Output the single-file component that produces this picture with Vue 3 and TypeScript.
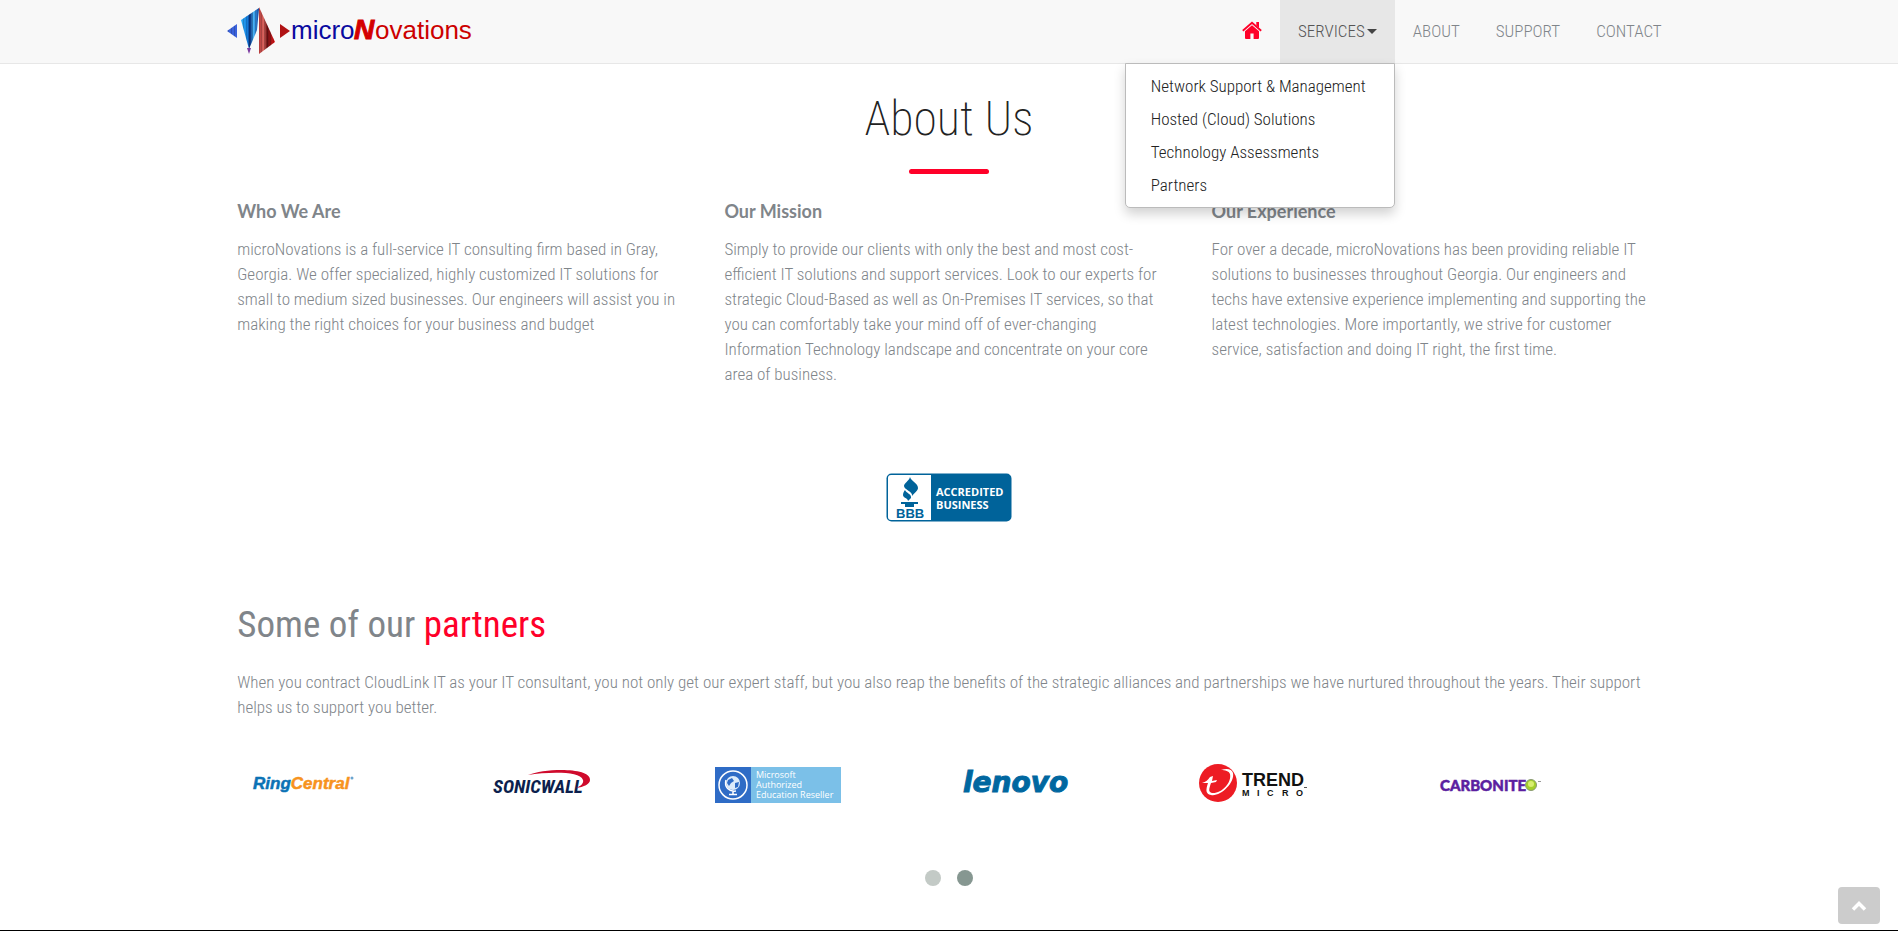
<script setup lang="ts">
import { ref } from 'vue'

interface Column {
  title: string
  text: string
}

const services: string[] = [
  'Network Support & Management',
  'Hosted (Cloud) Solutions',
  'Technology Assessments',
  'Partners',
]

const pages: string[] = ['About', 'Support', 'Contact']

const columns: Column[] = [
  {
    title: 'Who We Are',
    text: 'microNovations is a full-service IT consulting firm based in Gray, Georgia. We offer specialized, highly customized IT solutions for small to medium sized businesses. Our engineers will assist you in making the right choices for your business and budget',
  },
  {
    title: 'Our Mission',
    text: 'Simply to provide our clients with only the best and most cost-efficient IT solutions and support services. Look to our experts for strategic Cloud-Based as well as On-Premises IT services, so that you can comfortably take your mind off of ever-changing Information Technology landscape and concentrate on your core area of business.',
  },
  {
    title: 'Our Experience',
    text: 'For over a decade, microNovations has been providing reliable IT solutions to businesses throughout Georgia. Our engineers and techs have extensive experience implementing and supporting the latest technologies. More importantly, we strive for customer service, satisfaction and doing IT right, the first time.',
  },
]

const microLetters = [
  { letter: 'M', x: 56 },
  { letter: 'I', x: 71 },
  { letter: 'C', x: 81 },
  { letter: 'R', x: 96 },
  { letter: 'O', x: 110 },
]

const menuOpen = ref(true)
const slide = ref(1)
</script>

<template>
  <div class="page">
    <header class="navbar">
      <div class="container bar">
        <a class="brand" href="#" aria-label="microNovations">
          <svg width="264" height="63" viewBox="218 0 264 63">
            <defs>
              <linearGradient id="blueFace" x1="0" x2="1">
                <stop offset="0" stop-color="#2fb0fa" />
                <stop offset="0.35" stop-color="#1580e0" />
                <stop offset="0.5" stop-color="#062a78" />
                <stop offset="0.7" stop-color="#49b4f8" />
                <stop offset="1" stop-color="#0a3d9c" />
              </linearGradient>
              <linearGradient id="redFace" x1="0" x2="1">
                <stop offset="0" stop-color="#b33a3a" />
                <stop offset="0.3" stop-color="#d9655f" />
                <stop offset="0.5" stop-color="#6d1214" />
                <stop offset="0.75" stop-color="#a01518" />
                <stop offset="1" stop-color="#f01010" />
              </linearGradient>
              <pattern id="stripes" width="3" height="4" patternUnits="userSpaceOnUse">
                <rect width="1" height="4" fill="#000" fill-opacity="0.16" />
              </pattern>
            </defs>
            <path d="M227 31 237 24V38Z" fill="#3a62dc" />
            <path d="M241 20 259 8 257 30 249 49Z" fill="url(#blueFace)" />
            <path d="M247 48H251L249 54Z" fill="#7a3aa0" />
            <path d="M259 7 275 42 259 54Z" fill="url(#redFace)" />
            <path d="M227 31 237 24V38ZM259 7 275 42 259 54ZM241 20 259 8 257 30 249 49Z" fill="url(#stripes)" />
            <path d="M280 24 290 31 280 38Z" fill="#b01214" />
            <text class="brand-text" x="291" y="39" fill="#0a0aa0">micro</text>
            <text class="brand-n" x="354" y="39" fill="#d40000">N</text>
            <text class="brand-text" x="375" y="39" fill="#cc0000">ovations</text>
          </svg>
        </a>
        <nav class="menu" aria-label="Main">
          <a class="link home" href="#" aria-label="Home">
            <svg width="20" height="18" viewBox="0 0 20 18">
              <path d="M10 4.2 17 10.2V17a1 1 0 0 1-1 1h-4.400v-5.400H8.400V18H4a1 1 0 0 1-1-1v-6.800Z" />
              <path d="M.8 9.800 10 1.800l9.200 8" fill="none" stroke="#ff0029" stroke-width="1.800" />
              <path d="M14.300 1H17v6l-2.700-2.400Z" />
            </svg>
          </a>
          <div class="dropdown">
            <button class="link toggle" type="button" :aria-expanded="menuOpen" @click="menuOpen = !menuOpen">
              Services<span class="caret"></span>
            </button>
            <ul v-if="menuOpen" class="dropdown-menu">
              <li v-for="service in services" :key="service"><a href="#">{{ service }}</a></li>
            </ul>
          </div>
          <a v-for="page in pages" :key="page" class="link" href="#">{{ page }}</a>
        </nav>
      </div>
    </header>

    <main class="container content">
      <h1>About Us</h1>
      <div class="rule"></div>

      <section class="columns">
        <article v-for="column in columns" :key="column.title">
          <h2>{{ column.title }}</h2>
          <p>{{ column.text }}</p>
        </article>
      </section>

      <a class="bbb" href="#" aria-label="BBB Accredited Business">
        <svg width="126" height="49" viewBox="0 0 126 49">
          <rect x="0.500" y="0.500" width="125" height="48" rx="5" fill="#00639a" />
          <path d="M5 2H45V47H5a3 3 0 0 1-3-3V5a3 3 0 0 1 3-3Z" fill="#fff" />
          <path d="M24 4c1 4 8 6 8 11 0 3-4 5-6 8 1-5-8-6-8-10 0-3 5-5 6-9Z" fill="#00639a" />
          <path d="M19 17c1 3 7 4 6 8-1 1-2 2-3 3 0-3-5-3-5-6 0-2 1-4 2-5Z" fill="#00639a" />
          <path d="M15 29H32V31H28V34H19V31H15Z" fill="#00639a" />
          <text class="bbb-name" x="10" y="45" fill="#00639a">BBB</text>
          <text class="bbb-text" x="50" y="23" fill="#fff">ACCREDITED</text>
          <text class="bbb-text" x="50" y="36" fill="#fff">BUSINESS</text>
        </svg>
      </a>

      <section class="partners">
        <h2>Some of our <span>partners</span></h2>
        <p>
          When you contract CloudLink IT as your IT consultant, you not only get our expert staff, but you
          also reap the benefits of the strategic alliances and partnerships we have nurtured throughout
          the years. Their support helps us to support you better.
        </p>

        <div class="logos">
          <svg viewBox="0 0 132 62" role="img" aria-label="RingCentral">
            <text class="ring" x="16" y="36"><tspan fill="#0b72b5" stroke="#0b72b5">Ring</tspan><tspan fill="#f7931e" stroke="#f7931e">Central</tspan></text>
            <circle cx="115" cy="25" r="1.500" fill="#6aa5cf" />
          </svg>
          <svg viewBox="0 0 132 62" role="img" aria-label="SonicWall">
            <text class="sonic" x="18" y="40" fill="#0c1f4d">SONICWALL</text>
            <path d="M53 22C70 15 116 14 115 27c0 4-6 7-14 8 5-2 8-5 7-8C105 18 74 19 53 22Z" fill="#cf0a2c" />
          </svg>
          <svg viewBox="0 0 132 62" role="img" aria-label="Microsoft Authorized Education Reseller">
            <rect x="3" y="14" width="126" height="36" fill="#7bc0e8" />
            <rect x="3" y="14" width="36" height="36" fill="#2f6cc6" />
            <circle cx="21" cy="32" r="14" fill="none" stroke="#fff" stroke-width="1.500" />
            <circle cx="21" cy="30" r="7" fill="#dcebfa" />
            <path d="M16 27l4-2 2 3-3 2-2 3-2-3ZM23 30l4-1-1 5-3 1Z" fill="#2f6cc6" />
            <path d="M14 27C12 34 17 39 24 38M21 38v3M17 41.500h8" fill="none" stroke="#fff" stroke-width="1.500" />
            <text class="micro" x="44" y="25" fill="#fff">Microsoft</text>
            <text class="micro" x="44" y="35" fill="#fff">Authorized</text>
            <text class="micro" x="44" y="45" fill="#fff">Education Reseller</text>
          </svg>
          <svg viewBox="0 0 132 62" role="img" aria-label="Lenovo">
            <text class="lenovo" x="14" y="39" fill="#0067a0" stroke="#0067a0">lenovo</text>
          </svg>
          <svg viewBox="0 0 132 62" role="img" aria-label="Trend Micro">
            <circle cx="32" cy="30" r="19" fill="#ed1c24" />
            <path d="M16 30c4-1 6-3 8-6l3-1-1 5 5-1-1 2-5 1c-2 6-3 9 1 10 9 1 20-10 18-19-1-3-5-4-9-4 6-2 11-1 12 3 2 10-13 24-22 22-6-1-5-6-3-12Z" fill="#fff" />
            <text class="trend" x="56" y="33" fill="#111">TREND</text>
            <text v-for="item in microLetters" :key="item.letter" class="trend-micro" :x="item.x" y="43" fill="#111">{{ item.letter }}</text>
            <path d="M118 34.500h3" stroke="#555" />
          </svg>
          <svg viewBox="0 0 132 62" role="img" aria-label="Carbonite">
            <text class="carbonite" x="17" y="38" fill="#5b1fa0" stroke="#5b1fa0">CARBONITE</text>
            <circle cx="108" cy="32" r="5.500" fill="#a4cf2a" stroke="#8a9a72" />
            <circle cx="108" cy="31" r="3" fill="#d8ee70" />
            <path d="M115 28.500h3" stroke="#999" />
          </svg>
        </div>

        <div class="dots">
          <button
            v-for="n in 2"
            :key="n"
            type="button"
            :class="{ active: slide === n - 1 }"
            :aria-label="`Slide ${n}`"
            @click="slide = n - 1"
          ></button>
        </div>
      </section>
    </main>

    <a class="to-top" href="#" aria-label="Back to top">
      <svg width="16" height="12" viewBox="0 0 16 12">
        <path d="M2 9.500 8 3.500l6 6" fill="none" stroke="#fff" stroke-width="3.500" />
      </svg>
    </a>
    <footer></footer>
  </div>
</template>

<style>
body {
  margin: 0;
  background: #fff;
}
</style>

<style scoped>
.page {
  min-height: 100vh;
  display: flex;
  flex-direction: column;
  font: 300 17px/25px 'Roboto Condensed', Roboto, 'Liberation Sans', sans-serif;
  color: #80858a;
}
.page * {
  box-sizing: border-box;
}
.container {
  width: 77%;
  margin: 0 auto;
}
.navbar {
  background: #f8f8f8;
  border-bottom: 1px solid #e7e7e7;
}
.bar {
  display: flex;
  justify-content: space-between;
}
.brand,
.brand svg,
.bbb svg,
.home svg,
.to-top svg {
  display: block;
}
.brand-text {
  font: 26px 'Liberation Sans', sans-serif;
}
.brand-n {
  font: italic bold 28px 'Liberation Sans', sans-serif;
  stroke: #d40000;
}
.menu {
  display: flex;
}
.link {
  height: 63px;
  padding: 0 18px;
  display: flex;
  align-items: center;
  border: 0;
  background: none;
  font: inherit;
  color: #80858a;
  text-transform: uppercase;
  text-decoration: none;
}
.home {
  padding-bottom: 4px;
}
.home path {
  fill: #ff0029;
}
.home path[fill='none'] {
  fill: none;
}
.toggle {
  background: #e7e7e7;
  color: #555;
}
.caret {
  margin-left: 2px;
  border: 5px solid transparent;
  border-top-color: #444;
  border-bottom: 0;
}
.dropdown {
  position: relative;
}
.dropdown-menu {
  position: absolute;
  top: 100%;
  right: 0;
  min-width: 270px;
  margin: 0;
  padding: 6px 0 5px;
  list-style: none;
  white-space: nowrap;
  background: #fff;
  border: 1px solid #bbb;
  border-radius: 0 0 5px 5px;
  box-shadow: 0 6px 12px rgba(0, 0, 0, 0.18);
}
.dropdown-menu a {
  display: block;
  padding: 4px 25px;
  color: #222;
  text-decoration: none;
}
h1,
h2,
p {
  margin: 0;
}
.content {
  flex: 1;
}
h1 {
  margin-top: 25px;
  font-size: 48px;
  line-height: 60px;
  font-weight: 200;
  text-align: center;
  color: #222;
}
.rule {
  width: 80px;
  height: 5px;
  margin: 20px auto 25px;
  border-radius: 3px;
  background: #ff0029;
}
.columns {
  display: grid;
  grid-template-columns: repeat(3, 1fr);
}
.columns article {
  padding: 0 19px;
}
.columns h2 {
  margin-bottom: 14px;
  font: bold 18px/24px Lato, sans-serif;
}
.bbb {
  display: block;
  width: 126px;
  margin: 86px auto 78px;
}
.bbb-name {
  font: bold 13px 'Liberation Sans', sans-serif;
}
.bbb-text {
  font: bold 11px 'Open Sans', sans-serif;
}
.partners {
  padding: 0 19px;
}
.partners h2 {
  margin-bottom: 20px;
  font-size: 37px;
  line-height: 50px;
  font-weight: 400;
}
.partners h2 span {
  color: #ff0029;
}
.logos {
  display: grid;
  grid-template-columns: repeat(6, 1fr);
  margin-top: 33px;
}
.logos svg {
  width: 132px;
  height: 62px;
}
.ring {
  font: italic bold 17px 'Liberation Sans', sans-serif;
  stroke-width: 0.5px;
}
.sonic {
  font: italic bold 19px 'Roboto Condensed', sans-serif;
}
.micro {
  font: 9px 'Open Sans', sans-serif;
}
.lenovo {
  font: italic bold 28px 'DejaVu Sans', sans-serif;
  stroke-width: 1px;
}
.trend {
  font: bold 18px 'Liberation Sans', sans-serif;
}
.trend-micro {
  font: bold 9px 'Liberation Sans', sans-serif;
}
.carbonite {
  font: 900 15px Lato, sans-serif;
  stroke-width: 0.5px;
}
.dots {
  display: flex;
  justify-content: center;
  gap: 16px;
  margin-top: 55px;
}
.dots button {
  width: 16px;
  height: 16px;
  padding: 0;
  border: 0;
  border-radius: 50%;
  background: #c3cac6;
}
.dots .active {
  background: #869791;
}
.to-top {
  position: fixed;
  right: 18px;
  bottom: 7px;
  width: 42px;
  height: 37px;
  display: flex;
  align-items: center;
  justify-content: center;
  border-radius: 4px;
  background: #ccc;
}
footer {
  height: 1px;
  background: #000;
}
</style>
